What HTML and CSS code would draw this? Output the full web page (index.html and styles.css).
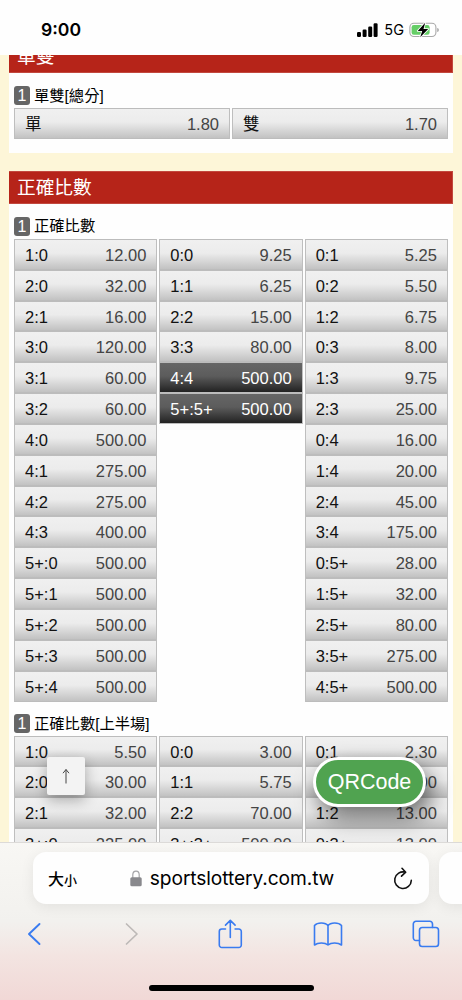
FILE: index.html
```
<!DOCTYPE html>
<html lang="zh-Hant">
<head>
  <meta charset="UTF-8">
  <meta name="viewport" content="width=device-width, initial-scale=1.0">
  <title>sportslottery.com.tw</title>
  <link rel="stylesheet" href="styles.css">
</head>
<body>
  <header class="status-bar">
    <span class="time">9:00</span>
    <div class="status-icons">
      <svg class="signal" viewBox="0 0 21 14" width="21" height="14">
        <rect x="0" y="9" width="4" height="5" rx="1.2"/>
        <rect x="5.6" y="6.5" width="4" height="7.5" rx="1.2"/>
        <rect x="11.2" y="3.5" width="4" height="10.5" rx="1.2"/>
        <rect x="16.6" y="0.3" width="4" height="13.7" rx="1.2"/>
      </svg>
      <span class="network">5G</span>
      <svg class="battery" viewBox="0 0 31 16" width="31" height="16">
        <rect x="0.9" y="1.3" width="26" height="13.2" rx="4" fill="#fff" stroke="#a9a9a9" stroke-width="1.1"/>
        <rect x="2.6" y="3" width="18" height="9.8" rx="2.2" fill="#65ce67"/>
        <path d="M28.2 6v4c1.2-.4 1.7-1.2 1.7-2s-.5-1.6-1.7-2z" fill="#a9a9a9"/>
        <path d="M16.2 .8L8.7 8.9h4.5l-2 6.4 8-8.2h-4.7z" fill="#000" stroke="#fff" stroke-width="1.6" paint-order="stroke" stroke-linejoin="round"/>
      </svg>
    </div>
  </header>

  <main class="page">
    <section class="panel panel-first">
      <h2 class="panel-title">單雙</h2>
      <h3 class="market"><span class="badge">1</span>單雙[總分]</h3>
      <div class="odds odds-two">
        <ul class="col"><li><b>單</b><span>1.80</span></li></ul>
        <ul class="col"><li><b>雙</b><span>1.70</span></li></ul>
      </div>
    </section>

    <section class="panel">
      <h2 class="panel-title">正確比數</h2>
      <h3 class="market"><span class="badge">1</span>正確比數</h3>
      <div class="odds">
        <ul class="col">
          <li><b>1:0</b><span>12.00</span></li>
          <li><b>2:0</b><span>32.00</span></li>
          <li><b>2:1</b><span>16.00</span></li>
          <li><b>3:0</b><span>120.00</span></li>
          <li><b>3:1</b><span>60.00</span></li>
          <li><b>3:2</b><span>60.00</span></li>
          <li><b>4:0</b><span>500.00</span></li>
          <li><b>4:1</b><span>275.00</span></li>
          <li><b>4:2</b><span>275.00</span></li>
          <li><b>4:3</b><span>400.00</span></li>
          <li><b>5+:0</b><span>500.00</span></li>
          <li><b>5+:1</b><span>500.00</span></li>
          <li><b>5+:2</b><span>500.00</span></li>
          <li><b>5+:3</b><span>500.00</span></li>
          <li><b>5+:4</b><span>500.00</span></li>
        </ul>
        <ul class="col">
          <li><b>0:0</b><span>9.25</span></li>
          <li><b>1:1</b><span>6.25</span></li>
          <li><b>2:2</b><span>15.00</span></li>
          <li><b>3:3</b><span>80.00</span></li>
          <li class="selected"><b>4:4</b><span>500.00</span></li>
          <li class="selected"><b>5+:5+</b><span>500.00</span></li>
        </ul>
        <ul class="col">
          <li><b>0:1</b><span>5.25</span></li>
          <li><b>0:2</b><span>5.50</span></li>
          <li><b>1:2</b><span>6.75</span></li>
          <li><b>0:3</b><span>8.00</span></li>
          <li><b>1:3</b><span>9.75</span></li>
          <li><b>2:3</b><span>25.00</span></li>
          <li><b>0:4</b><span>16.00</span></li>
          <li><b>1:4</b><span>20.00</span></li>
          <li><b>2:4</b><span>45.00</span></li>
          <li><b>3:4</b><span>175.00</span></li>
          <li><b>0:5+</b><span>28.00</span></li>
          <li><b>1:5+</b><span>32.00</span></li>
          <li><b>2:5+</b><span>80.00</span></li>
          <li><b>3:5+</b><span>275.00</span></li>
          <li><b>4:5+</b><span>500.00</span></li>
        </ul>
      </div>

      <h3 class="market market-half"><span class="badge">1</span>正確比數[上半場]</h3>
      <div class="odds">
        <ul class="col">
          <li><b>1:0</b><span>5.50</span></li>
          <li><b>2:0</b><span>30.00</span></li>
          <li><b>2:1</b><span>32.00</span></li>
          <li><b>3+:0</b><span>225.00</span></li>
        </ul>
        <ul class="col">
          <li><b>0:0</b><span>3.00</span></li>
          <li><b>1:1</b><span>5.75</span></li>
          <li><b>2:2</b><span>70.00</span></li>
          <li><b>3+:3+</b><span>500.00</span></li>
        </ul>
        <ul class="col">
          <li><b>0:1</b><span>2.30</span></li>
          <li><b>0:2</b><span>8.00</span></li>
          <li><b>1:2</b><span>13.00</span></li>
          <li><b>0:3+</b><span>13.00</span></li>
        </ul>
      </div>
    </section>

    <button class="to-top" type="button" aria-label="Top">
      <svg viewBox="0 0 10 16" width="10" height="16"><path d="M5 15.5V1.5M2 5.2L5 1.5l3 3.7"/></svg>
    </button>
    <button class="qrcode" type="button">QRCode</button>
  </main>

  <footer class="browser-bar">
    <div class="tabs">
      <div class="address">
        <span class="text-size">大<small>小</small></span>
        <span class="url">
          <svg viewBox="0 0 12 17" width="12" height="17">
            <path d="M2.8 8V4.8a3.2 3.7 0 0 1 6.4 0V8" fill="none" stroke="#a5a5a8" stroke-width="1.2"/>
            <rect x="0.3" y="7.3" width="11.4" height="9" rx="1.5" fill="#89898d"/>
          </svg>
          sportslottery.com.tw
        </span>
        <svg class="reload" viewBox="0 0 20 23" width="20" height="23">
          <path d="M12.3 5.2A8.3 8.3 0 1 0 18.300 13.400M9 1.300l3.700 3.900-4.200 4"/>
        </svg>
      </div>
      <div class="next-tab"></div>
    </div>
    <nav class="toolbar">
      <svg viewBox="0 0 14 24" height="24"><path d="M12.5 2L2 12l10.5 10" stroke-width="1.9"/></svg>
      <svg class="disabled" viewBox="0 0 14 24" height="24"><path d="M1.5 2L12 12 1.5 22" stroke-width="1.7"/></svg>
      <svg viewBox="0 0 26 30" height="30"><path d="M8.5 10H4.800a2.500 2.500 0 0 0-2.500 2.500v13.500a2.500 2.500 0 0 0 2.500 2.500h17a2.500 2.500 0 0 0 2.500-2.500V12.500a2.500 2.500 0 0 0-2.500-2.500h-3.700M13.300 18.500V1.500M8.500 6.100l4.800-4.700 4.800 4.700"/></svg>
      <svg viewBox="0 0 30 26" height="26"><path d="M15 4.800C12.500 1.200 4.500 1.200 1.500 4.500v19.500c3.500-2.600 10.500-2.600 13.500 0 3-2.600 10-2.600 13.500 0V4.500C25.500 1.200 17.500 1.200 15 4.800zV24"/></svg>
      <svg viewBox="0 0 28 28" height="28"><path d="M7.500 20.500H4A2.700 2.700 0 0 1 1.300 17.800V4A2.700 2.700 0 0 1 4 1.300h13.800A2.700 2.700 0 0 1 20.500 4v3.500"/><rect x="7.500" y="7.500" width="19" height="19" rx="2.700"/></svg>
    </nav>
    <div class="home-indicator"></div>
  </footer>
</body>
</html>
```
FILE: styles.css
```
* {
  box-sizing: border-box;
}
body {
  margin: 0;
  width: 462px;
  height: 1000px;
  overflow: hidden;
  display: flex;
  flex-direction: column;
  background: #fefefe;
  font-family: "Liberation Sans", "Noto Sans CJK TC", sans-serif;
}
h2, h3, ul {
  margin: 0;
  padding: 0;
  font-weight: normal;
  list-style: none;
}
button {
  border: none;
  padding: 0;
}

/* status bar */
.status-bar {
  flex: none;
  height: 55px;
  display: flex;
  justify-content: space-between;
  align-items: center;
  padding: 4px 22px 0 41px;
  font-family: Inter, sans-serif;
}
.time {
  font-size: 17.6px;
  font-weight: 600;
}
.status-icons {
  display: flex;
  align-items: center;
}
.network {
  margin: 0 5px 0 6px;
  font-size: 14.5px;
}

/* odds page */
.page {
  position: relative;
  flex: none;
  height: 787px;
  overflow: hidden;
  display: flex;
  flex-direction: column;
  padding: 0 9px;
  background: #fdf6d8;
}
.panel {
  flex: none;
  background: #fefefe;
}
.panel-first {
  margin-top: -15px;
  margin-bottom: 18px;
  padding-bottom: 14px;
}
.panel-title {
  height: 33px;
  padding-left: 8px;
  background: #b62419;
  border: 1px solid #c2483e;
  border-left: none;
  color: #fff;
  font-size: 18.7px;
  line-height: 31px;
}
.market {
  display: flex;
  align-items: center;
  height: 35px;
  padding: 10px 0 0 5px;
  font-size: 15.3px;
  line-height: 24px;
}
.market-half {
  height: 34px;
}
.badge {
  width: 16px;
  height: 19px;
  margin-right: 4px;
  border-radius: 3px;
  background: #666;
  color: #fff;
  font-size: 16px;
  line-height: 19px;
  text-align: center;
}
.odds {
  display: grid;
  grid-template-columns: repeat(3, 1fr);
  align-items: start;
  column-gap: 2px;
  padding: 0 5px;
}
.odds-two {
  grid-template-columns: repeat(2, 1fr);
}
.col {
  border: solid #bebebe;
  border-width: 0 1px;
}
.col li {
  display: flex;
  justify-content: space-between;
  height: 30.85px;
  padding: 0 10px;
  border: solid #bcbcbc;
  border-width: 1px 0;
  background: linear-gradient(#f0f0f0, #ececec 45%, #c2c2c2);
  font-size: 16.5px;
  line-height: 30px;
}
.col b {
  color: #111;
  font-weight: normal;
}
.col span {
  color: #444;
}
.col li.selected {
  background: linear-gradient(#666, #5c5c5c 45%, #222);
}
.col .selected b,
.col .selected span {
  color: #fff;
}

/* floating buttons */
.to-top {
  position: absolute;
  left: 47px;
  top: 702px;
  width: 38px;
  height: 38px;
  display: flex;
  align-items: center;
  justify-content: center;
  border-radius: 2px;
  background: #f3f3f3;
  box-shadow: 0 5px 14px rgba(0, 0, 0, 0.3);
}
.to-top svg {
  fill: none;
  stroke: #444;
  stroke-width: 1;
}
.qrcode {
  position: absolute;
  left: 313px;
  top: 702px;
  width: 113px;
  height: 50px;
  border: 3px solid #fff;
  border-radius: 25px;
  background: #50a350;
  box-shadow: 5px 10px 22px rgba(0, 0, 0, 0.55);
  color: #fff;
  font-family: "Liberation Sans", sans-serif;
  font-size: 21.5px;
}

/* browser toolbar */
.browser-bar {
  position: relative;
  flex: none;
  height: 158px;
  border-top: 1px solid #dcdad8;
  background: linear-gradient(#f8f7f4 0, #f2f1ee 50%, #f3e4e1 72%, #f1d8d6 100%);
}
.tabs {
  display: flex;
  gap: 10px;
  padding: 9px 0 0 33px;
  overflow: hidden;
  height: 85px;
}
.address,
.next-tab {
  flex: none;
  height: 52px;
  border-radius: 13px;
  background: #fefefe;
  box-shadow: 0 3px 14px rgba(0, 0, 0, 0.07);
}
.address {
  width: 396px;
  display: flex;
  justify-content: space-between;
  align-items: center;
  padding: 0 16px 0 15px;
}
.next-tab {
  width: 60px;
}
.text-size {
  font-family: "Noto Sans CJK TC", sans-serif;
  font-size: 16px;
  font-weight: 500;
}
.text-size small {
  font-size: 13px;
}
.url {
  display: flex;
  align-items: center;
  gap: 8px;
  margin-right: 6px;
  font-family: Inter, sans-serif;
  font-size: 19.2px;
  letter-spacing: -0.1px;
}
.reload {
  fill: none;
  stroke: #111;
  stroke-width: 1.6;
  stroke-linecap: round;
  stroke-linejoin: round;
}
.toolbar {
  display: flex;
  justify-content: space-between;
  align-items: center;
  height: 30px;
  margin-top: -9px;
  padding: 0 21px 0 19px;
}
.toolbar svg {
  width: 30px;
  fill: none;
  stroke: #397bf0;
  stroke-width: 1.6;
  stroke-linecap: round;
  stroke-linejoin: round;
}
.toolbar .disabled {
  stroke: #bdb9b7;
}
.home-indicator {
  width: 165px;
  height: 6px;
  margin: 36px auto 0;
  border-radius: 3px;
  background: #000;
}
```
